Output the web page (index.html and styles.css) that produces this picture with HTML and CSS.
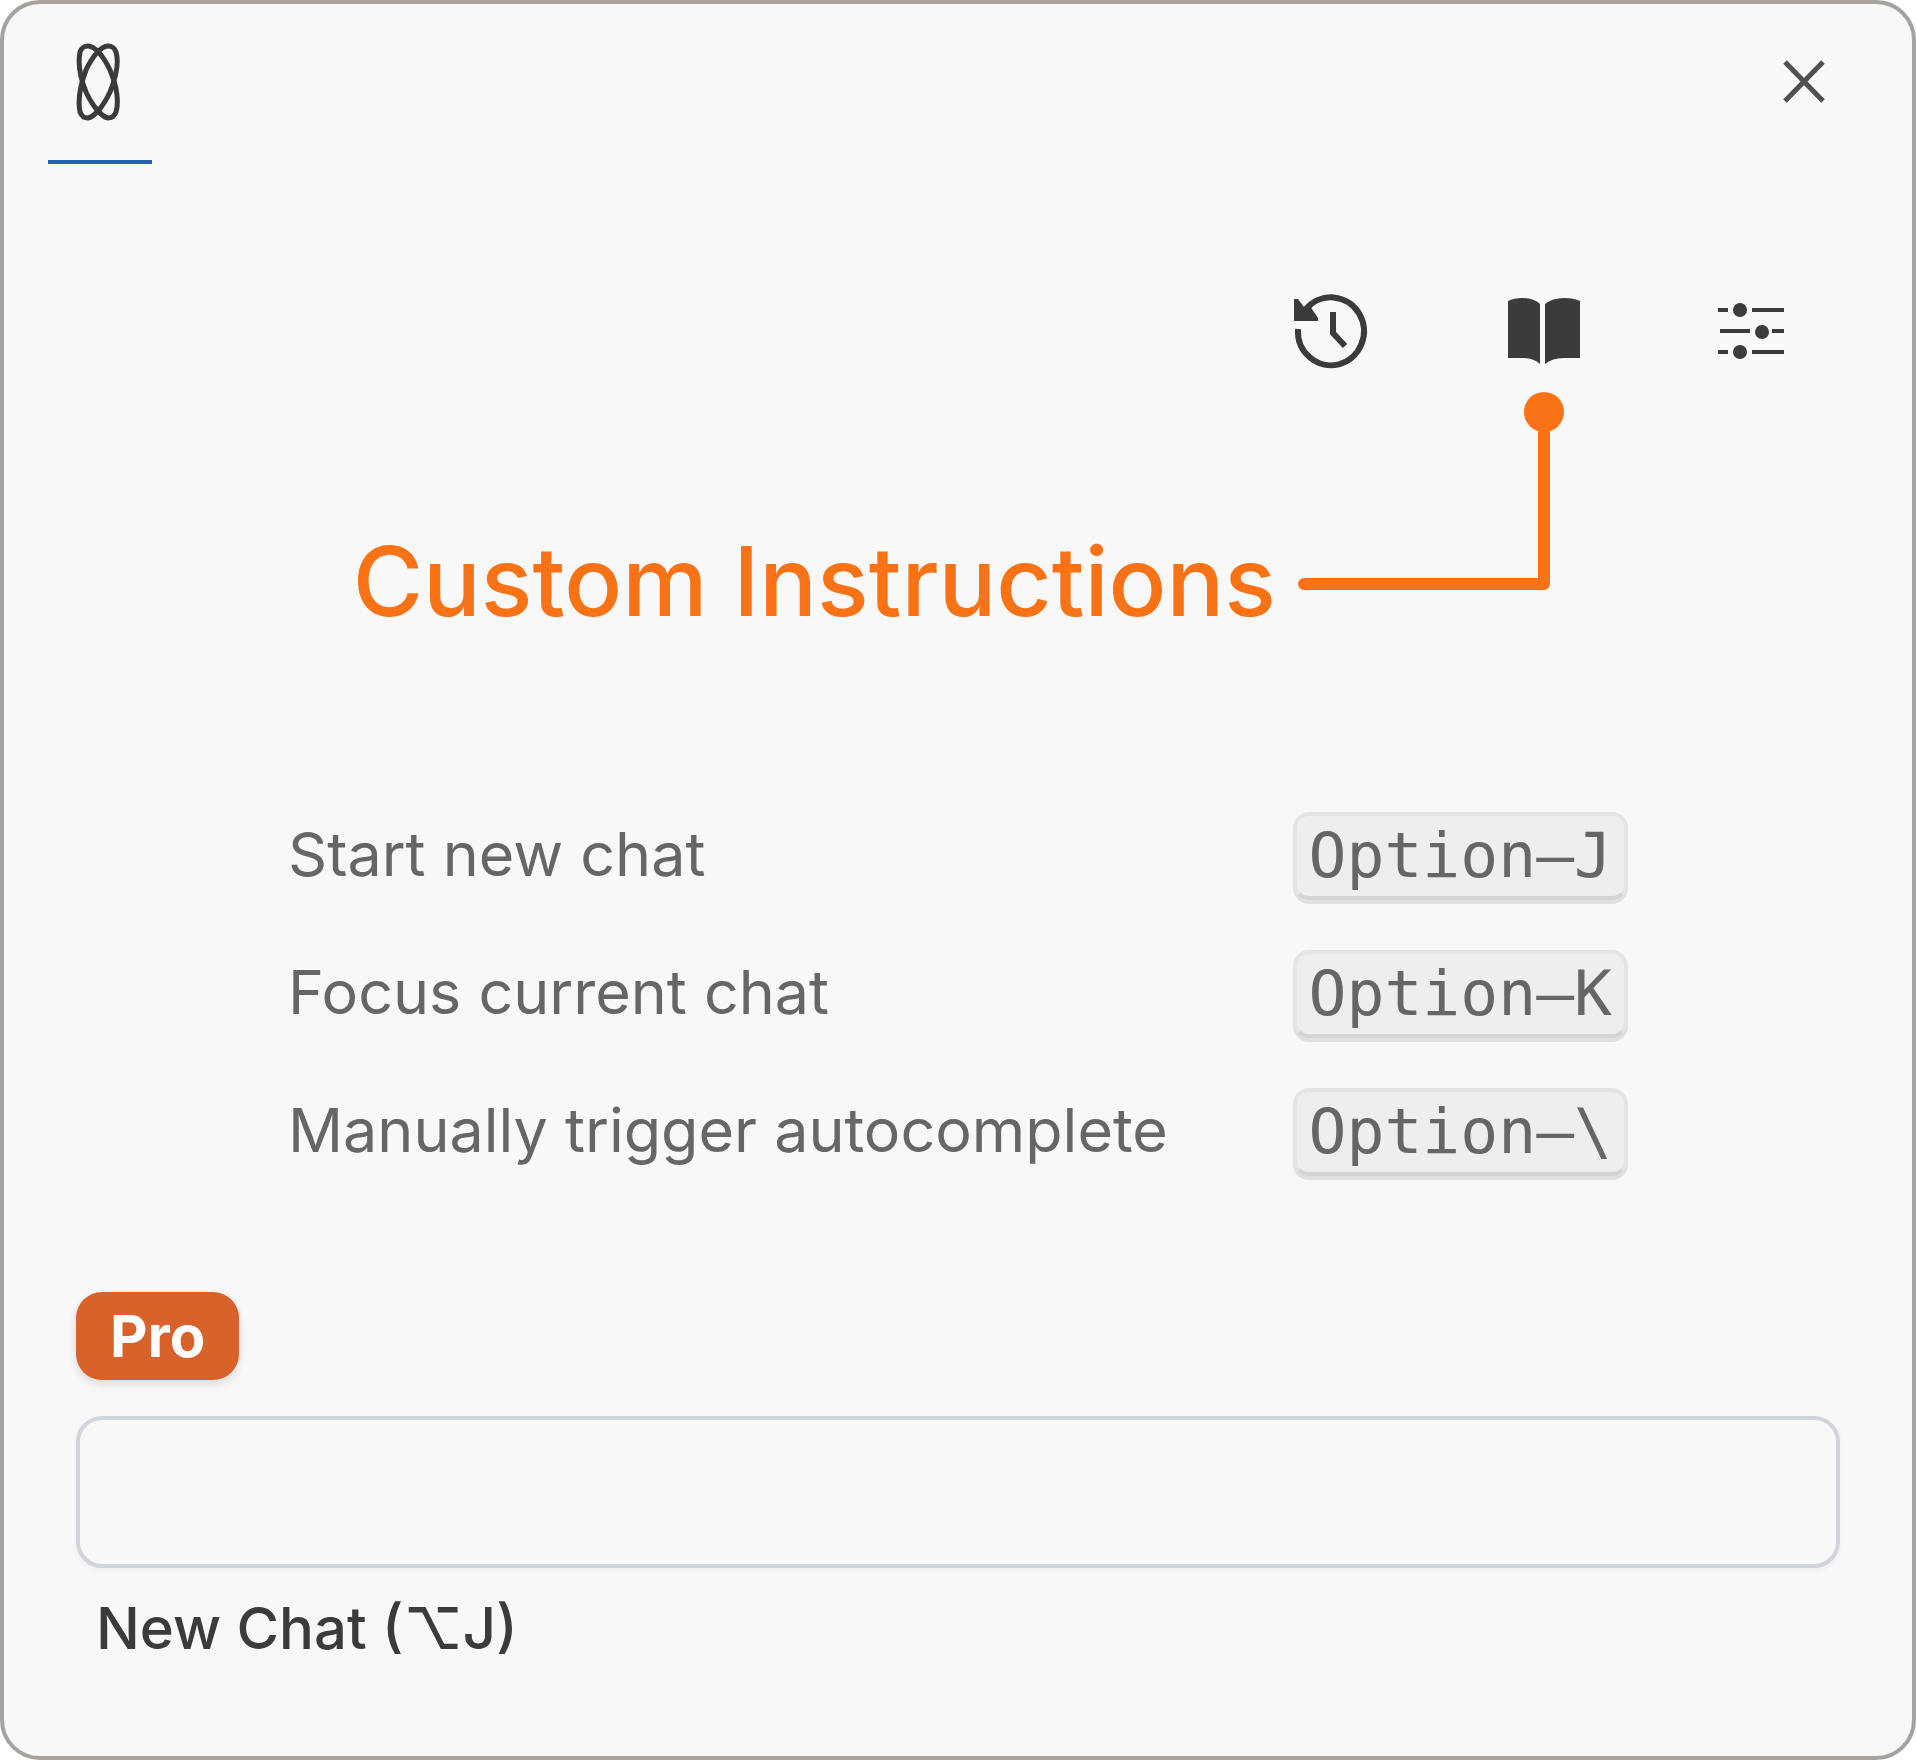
FILE: index.html
```html
<!DOCTYPE html>
<html lang="en">
<head>
<meta charset="utf-8">
<meta name="viewport" content="width=device-width, initial-scale=1">
<title>Chat</title>
<link rel="stylesheet" href="styles.css">
</head>
<body>
<main class="panel">
  <header class="header">
    <button class="tab" type="button" aria-label="Chat">
      <svg class="tab-icon" viewBox="0 0 48 80" aria-hidden="true">
        <path d="M12 4C19 4 28 15 34 28C41 44 43 60 40 70C38 75 36 76 32 76C26 75 17 65 10 50C4 35 2 20 4 10C6 5 8 4 12 4Z"/>
        <path d="M32 4C25 4 16 15 10 28C4 44 2 60 4 70C6 75 8 76 12 76C18 75 27 65 34 50C40 35 43 20 40 10C38 5 36 4 32 4Z"/>
      </svg>
    </button>
    <button class="close" type="button" aria-label="Close">
      <svg class="close-icon" viewBox="0 0 48 48" aria-hidden="true">
        <path d="M5 4L43 43M43 4L5 43"/>
      </svg>
    </button>
  </header>

  <nav class="toolbar" aria-label="Chat tools">
    <button class="tool" type="button" aria-label="Chat history">
      <svg class="tool-icon" viewBox="0 0 80 80" aria-hidden="true">
        <path class="line" d="M6 37A33 34 0 1 0 14 17"/>
        <path class="solid" d="M2 7H6L12 15L18 14L26 26V29H2Z"/>
        <path class="line" d="M41 20V41L53 54"/>
      </svg>
    </button>
    <button class="tool" type="button" aria-label="Custom instructions">
      <svg class="tool-icon" viewBox="0 0 80 80" aria-hidden="true">
        <path class="solid" d="M4 9Q10 6 18 6Q30 6 36 12V72Q30 66 19 66H4Z"/>
        <path class="solid" d="M41 12Q48 6 60 6Q70 6 76 9V66H60Q48 66 41 72Z"/>
      </svg>
    </button>
    <button class="tool" type="button" aria-label="Settings">
      <svg class="tool-icon" viewBox="0 0 80 80" aria-hidden="true">
        <path class="thin" d="M2 18H12M36 18H68M4 39H34M56 39H68M2 60H12M36 60H68"/>
        <circle class="solid" cx="24" cy="18" r="7"/>
        <circle class="solid" cx="46" cy="40" r="7"/>
        <circle class="solid" cx="24" cy="60" r="7"/>
      </svg>
    </button>
  </nav>

  <div class="callout">
    <p class="callout-text">Custom Instructions</p>
    <svg class="callout-line" viewBox="0 0 266 198" aria-hidden="true">
      <path d="M6 192H246V20"/>
      <circle cx="246" cy="20" r="20"/>
    </svg>
  </div>

  <dl class="shortcuts">
    <dt>Start new chat</dt>
    <dd><kbd>Option–J</kbd></dd>
    <dt>Focus current chat</dt>
    <dd><kbd>Option–K</kbd></dd>
    <dt>Manually trigger autocomplete</dt>
    <dd><kbd>Option–\</kbd></dd>
  </dl>

  <form class="composer">
    <span class="badge">Pro</span>
    <textarea class="message" rows="1" aria-label="Message"></textarea>
    <button class="new-chat" type="button">New Chat (⌥J)</button>
  </form>
</main>
</body>
</html>
```
FILE: styles.css
```css
* {
  box-sizing: border-box;
}

body {
  margin: 0;
  background: #fff;
  color: #3b3b3b;
  font-family: Inter, "Liberation Sans", sans-serif;
}

button {
  padding: 0;
  border: 0;
  background: none;
  color: inherit;
  font: inherit;
  cursor: pointer;
}

svg {
  display: block;
}

.panel {
  display: flex;
  flex-direction: column;
  min-height: 100vh;
  border: 4px solid #a6a29f;
  border-radius: 40px;
  background: #f8f8f8;
}

.header {
  display: flex;
  justify-content: space-between;
  align-items: flex-start;
  padding: 0 84px 0 44px;
}

.tab {
  display: flex;
  justify-content: center;
  width: 104px;
  height: 160px;
  padding-top: 38px;
  border-bottom: 4px solid #2b5fb4;
}

.tab-icon {
  width: 48px;
  height: 80px;
  fill: none;
  stroke: #3b3b3b;
  stroke-width: 5;
}

.close {
  margin-top: 54px;
}

.close-icon {
  width: 48px;
  height: 48px;
  fill: none;
  stroke: #505050;
  stroke-width: 5;
}

.toolbar {
  display: flex;
  justify-content: flex-end;
  gap: 132px;
  padding: 128px 116px 0 0;
}

.tool-icon {
  width: 80px;
  height: 80px;
}

.line {
  fill: none;
  stroke: #3b3b3b;
  stroke-width: 6;
}

.thin {
  fill: none;
  stroke: #3b3b3b;
  stroke-width: 4;
}

.solid {
  fill: #3b3b3b;
}

.callout {
  display: flex;
  justify-content: flex-end;
  gap: 22px;
  min-height: 237px;
  margin-top: 20px;
  padding-right: 348px;
}

.callout-text {
  align-self: flex-end;
  margin: 0;
  color: #f97316;
  font-size: 96px;
  font-weight: 500;
  line-height: 96px;
}

.callout-line {
  flex: none;
  width: 266px;
  height: 198px;
}

.callout-line path {
  fill: none;
  stroke: #f97316;
  stroke-width: 12;
  stroke-linecap: round;
  stroke-linejoin: round;
}

.callout-line circle {
  fill: #f97316;
}

.shortcuts {
  display: grid;
  grid-template-columns: 1fr auto;
  row-gap: 50px;
  margin: 183px 284px 0;
  color: #666;
  font-size: 61px;
  line-height: 84px;
}

.shortcuts dd {
  margin: 0;
}

kbd {
  display: block;
  padding: 0 12px;
  border: 4px solid #e4e4e4;
  border-bottom-color: #d4d4d4;
  border-radius: 16px;
  background: #eee;
  box-shadow: 0 4px 0 #e0e0e0;
  font-family: "DejaVu Sans Mono", monospace;
  font-size: 63px;
  line-height: 80px;
}

.composer {
  display: flex;
  flex-direction: column;
  align-items: flex-start;
  padding: 116px 72px 48px;
}

.badge {
  padding: 0 34px;
  border-radius: 26px;
  background: #d9622b;
  box-shadow: 0 4px 10px rgba(0, 0, 0, 0.12);
  color: #fff;
  font-size: 58px;
  font-weight: 700;
  line-height: 88px;
}

.message {
  width: 100%;
  height: 152px;
  margin: 36px 0 28px;
  padding: 36px 24px;
  border: 4px solid #d1d5db;
  border-radius: 26px;
  outline: 0;
  background: transparent;
  box-shadow: 0 3px 6px rgba(0, 0, 0, 0.04);
  color: inherit;
  font: inherit;
  font-size: 58px;
  resize: none;
}

.new-chat {
  margin-left: 20px;
  font-size: 58px;
  font-weight: 500;
  line-height: 64px;
}
```
